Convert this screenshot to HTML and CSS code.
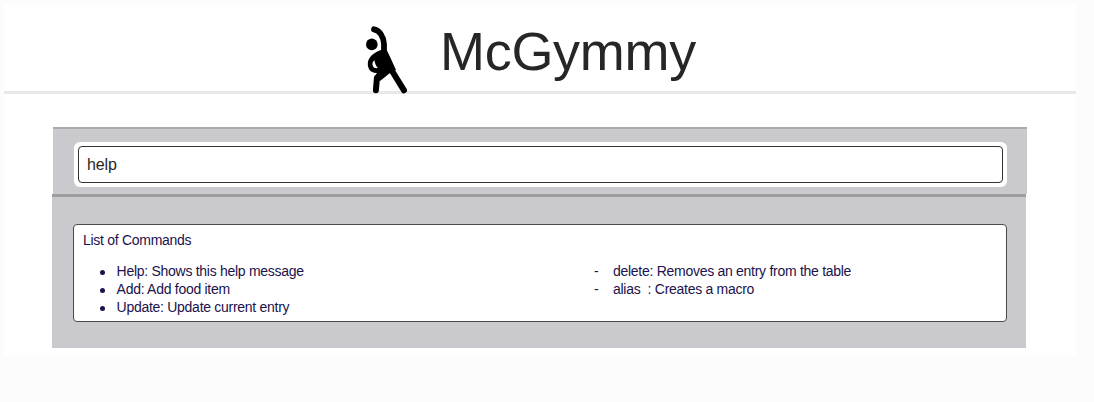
FILE: index.html
```html
<!DOCTYPE html>
<html lang="en">
<head>
<meta charset="utf-8">
<title>McGymmy</title>
<link rel="stylesheet" href="styles.css">
</head>
<body>
<div class="app">
  <header class="header">
    <svg class="logo" viewBox="0 0 48 72" fill="none" stroke="#000" stroke-linecap="round" stroke-linejoin="round">
      <circle cx="9.8" cy="22.4" r="5.800" fill="#000" stroke="none"/>
      <path d="M12 7.300C17.500 8.500 21.300 14 22 22L22 32" stroke-width="5.800"/>
      <path fill-rule="evenodd" d="M19 28L25 28.500L29 37L34 48L28 51L18 59L12 56L15 51C9.500 51.500 5.800 47.500 5.800 42C5.800 35 12 30.500 19 28ZM12.500 38.200C10.300 39.500 9.900 42 11 44.200C12 46 13.500 46.400 15.800 46C13.800 43.500 12.700 41 12.500 38.200Z" fill="#000" stroke="none"/>
      <path d="M18 53L14.900 56L13.900 68.300" stroke-width="6"/>
      <path d="M27 44L42 68.300" stroke-width="6"/>
    </svg>
    <h1 class="title">McGymmy</h1>
  </header>
  <main class="console">
    <section class="command-bar">
      <div class="field-frame"><div class="field">help</div></div>
    </section>
    <section class="result">
      <div class="output">
        <p class="output-title">List of Commands</p>
        <div class="columns">
          <ul class="commands">
            <li>Help: Shows this help message</li>
            <li>Add: Add food item</li>
            <li>Update: Update current entry</li>
          </ul>
          <ul class="commands dashed">
            <li>delete: Removes an entry from the table</li>
            <li class="spaced">alias  : Creates a macro</li>
          </ul>
        </div>
      </div>
    </section>
  </main>
</div>
</body>
</html>
```
FILE: styles.css
```css
* { box-sizing: border-box; }
body {
  margin: 0;
  padding: 4px 18px 46px 4px;
  background: #fcfcfc;
  font-family: "Liberation Sans", Arial, sans-serif;
}
.app { height: 352px; background: #fff; }
.header {
  display: flex;
  height: 90px;
  padding: 18px 0 0 358px;
  border-bottom: 3px solid #e8e8e8;
}
.logo { width: 48px; height: 72px; flex: none; }
.title {
  margin: 0 0 0 30px;
  color: #262626;
  font-size: 54px;
  font-weight: 400;
  letter-spacing: -0.3px;
  line-height: 58px;
}
.console { width: 975px; margin: 33px 0 0 48px; }
.command-bar {
  height: 67px;
  margin-left: 1px;
  padding: 13px 20px 0 21px;
  border-top: 2px solid #ababae;
  background: #cac9ce;
}
.field-frame {
  height: 45px;
  padding: 4px;
  border-radius: 6px;
  background: #fff;
}
.field {
  height: 37px;
  padding: 0 8px;
  border: 1px solid #333;
  border-radius: 4px;
  color: #262626;
  font-size: 16px;
  letter-spacing: -0.15px;
  line-height: 35px;
}
.result {
  width: 974px;
  height: 154px;
  padding: 27px 19px 0 21px;
  border-top: 3px solid #9d9d9f;
  background: #cac9ce;
}
.output {
  height: 98px;
  padding: 6px 9px 0;
  border: 1px solid #4a4a4a;
  border-radius: 4px;
  background: #fff;
  color: #20124d;
  font-size: 14px;
  letter-spacing: -0.280px;
  line-height: 18px;
}
.output-title { margin: 0 0 13px; }
.columns { display: grid; grid-template-columns: 511px 1fr; }
.commands { margin: 0; padding: 0 0 0 33.600px; list-style: none; }
.commands li { display: flex; align-items: center; white-space: nowrap; }
.commands li::before {
  content: "";
  width: 5px;
  height: 5px;
  margin: 3px 12px 0 -17px;
  border-radius: 50%;
  background: #20124d;
}
.commands.dashed { padding-left: 19px; }
.dashed li::before {
  content: "-";
  width: auto;
  height: auto;
  margin: 0 0 0 -19px;
  flex: 0 0 19px;
  background: none;
}
.commands .spaced { white-space: pre; }
```
